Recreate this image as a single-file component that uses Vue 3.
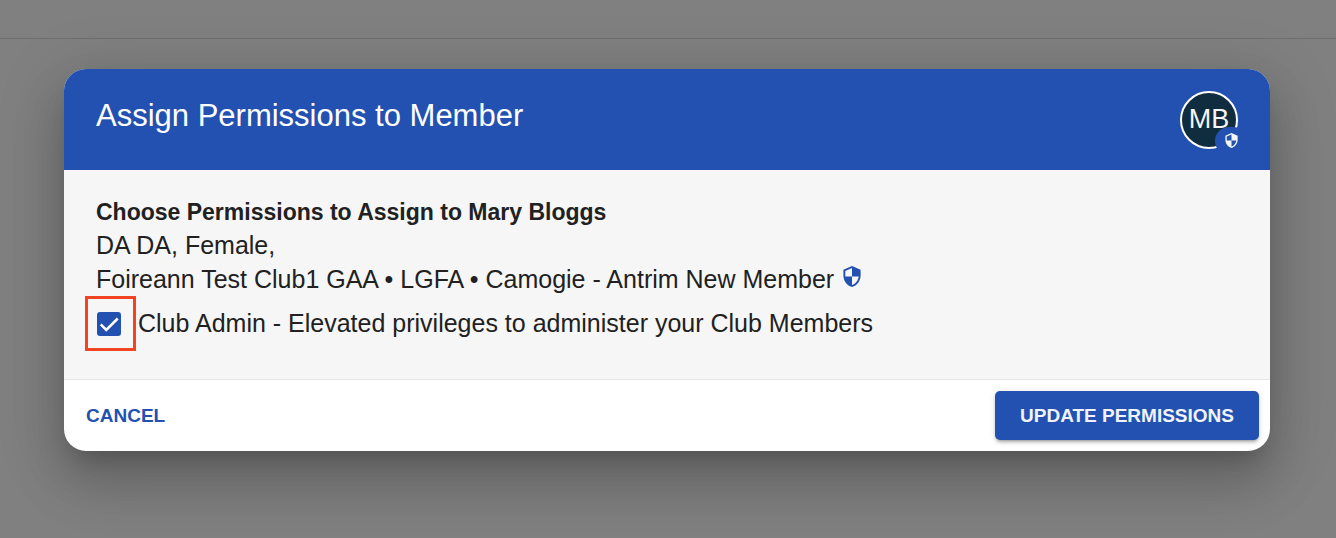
<script setup>
import { ref } from 'vue'

const clubAdmin = ref(true)
const member = {
  name: 'Mary Bloggs',
  initials: 'MB',
  details: 'DA DA, Female,',
  club: 'Foireann Test Club1 GAA • LGFA • Camogie - Antrim New Member',
}
</script>

<template>
  <div class="page">
    <div class="topbar"></div>
    <div class="backdrop">
      <section class="dialog" role="dialog" aria-modal="true" aria-labelledby="dialog-title">
        <header class="dialog-header">
          <h1 id="dialog-title">Assign Permissions to Member</h1>
          <div class="avatar">
            <span>{{ member.initials }}</span>
            <div class="badge">
              <svg class="badge-icon" viewBox="3 1 18 22" aria-hidden="true">
                <path fill="currentColor" fill-rule="evenodd" d="M12 1 3 5v6c0 5.550 3.840 10.740 9 12 5.160-1.260 9-6.450 9-12V5l-9-4zM12 3.190v8.800h7c-.53 4.120-3.280 7.790-7 8.940V12H5V6.300z" />
              </svg>
            </div>
          </div>
        </header>

        <div class="dialog-body">
          <h2>Choose Permissions to Assign to {{ member.name }}</h2>
          <p>{{ member.details }}</p>
          <p class="club">
            <span>{{ member.club }}</span>
            <svg class="shield" viewBox="3 1 18 22" aria-hidden="true">
              <path fill="currentColor" fill-rule="evenodd" d="M12 1 3 5v6c0 5.550 3.840 10.740 9 12 5.160-1.260 9-6.450 9-12V5l-9-4zM12 3.190v8.800h7c-.53 4.120-3.280 7.790-7 8.940V12H5V6.300z" />
            </svg>
          </p>
          <label class="permission">
            <span class="highlight">
              <input v-model="clubAdmin" type="checkbox" />
              <svg v-if="clubAdmin" class="tick" viewBox="0 0 24 24" aria-hidden="true">
                <path d="M3 12.500 9 18.500 21.500 6" fill="none" stroke="#fff" stroke-width="2.700" />
              </svg>
            </span>
            <span>Club Admin - Elevated privileges to administer your Club Members</span>
          </label>
        </div>

        <footer class="dialog-footer">
          <button type="button" class="cancel">CANCEL</button>
          <button type="button" class="update">UPDATE PERMISSIONS</button>
        </footer>
      </section>
    </div>
  </div>
</template>

<style>
html,
body,
#app {
  height: 100%;
}
body {
  margin: 0;
  background: #808080;
}
</style>

<style scoped>
.page {
  position: relative;
  min-height: 100%;
  overflow: hidden;
  font-family: "Liberation Sans", Arial, sans-serif;
  font-size: 25px;
  line-height: 33px;
  color: #212121;
}
.topbar {
  height: 38px;
  border-bottom: 1px solid #6e6e6e;
}
.backdrop {
  padding: 30px 66px 87px 64px;
}
.dialog {
  border-radius: 22px;
  background: #fff;
  box-shadow: 0 15px 21px -10px rgba(0, 0, 0, 0.2), 0 33px 52px 4px rgba(0, 0, 0, 0.14),
    0 12px 63px 11px rgba(0, 0, 0, 0.12);
}
.dialog-header {
  display: flex;
  justify-content: space-between;
  align-items: flex-start;
  padding: 22px 32px 21px;
  border-radius: 22px 22px 0 0;
  background: #2251b1;
  color: #fff;
}
h1 {
  margin: 0;
  font-size: 31px;
  line-height: 50px;
  font-weight: 400;
}
.avatar {
  position: relative;
  box-sizing: border-box;
  display: flex;
  align-items: center;
  justify-content: center;
  width: 58px;
  height: 58px;
  padding-bottom: 2px;
  border: 2px solid #fff;
  border-radius: 50%;
  background: #102c3f;
  color: #f5f5f5;
  font-size: 27px;
}
.badge {
  position: absolute;
  right: -11px;
  bottom: -8px;
  box-sizing: border-box;
  display: flex;
  align-items: center;
  justify-content: center;
  width: 32px;
  height: 28px;
  padding-bottom: 2px;
  border-radius: 14px;
  background: #2251b1;
}
.badge-icon {
  width: 13px;
  height: 15px;
}
.dialog-body {
  padding: 26px 32px 28px;
  border-bottom: 1px solid #e6e6e6;
  background: #f6f6f6;
}
h2 {
  margin: 0;
  font-size: 23px;
  line-height: 33px;
  font-weight: 700;
}
p {
  margin: 0;
}
.club {
  display: flex;
  align-items: center;
  gap: 9px;
  line-height: 34px;
}
.shield {
  width: 18px;
  height: 21px;
  margin-bottom: 5px;
  color: #2251b1;
}
.permission {
  display: flex;
  align-items: center;
  gap: 2px;
  margin-left: -11px;
}
.highlight {
  position: relative;
  display: flex;
  align-items: center;
  justify-content: center;
  width: 45px;
  height: 49px;
  border: 3px solid #f04423;
}
input {
  appearance: none;
  width: 24px;
  height: 24px;
  margin: 0 3px 0 0;
  border: 2px solid #2251b1;
  border-radius: 3px;
}
input:checked {
  background: #2251b1;
}
.tick {
  position: absolute;
  width: 22px;
  height: 22px;
  margin-right: 3px;
  pointer-events: none;
}
.dialog-footer {
  display: flex;
  justify-content: space-between;
  align-items: center;
  padding: 11px;
}
button {
  height: 49px;
  border: 0;
  border-radius: 5px;
  font-family: inherit;
  font-size: 19px;
  font-weight: 700;
}
.cancel {
  padding: 0 11px;
  background: transparent;
  color: #2251b1;
}
.update {
  padding: 0 25px;
  background: #2251b1;
  color: #f0f3fb;
  box-shadow: 0 4px 2px -3px rgba(0, 0, 0, 0.2), 0 3px 3px rgba(0, 0, 0, 0.14),
    0 1px 7px rgba(0, 0, 0, 0.12);
}
</style>
